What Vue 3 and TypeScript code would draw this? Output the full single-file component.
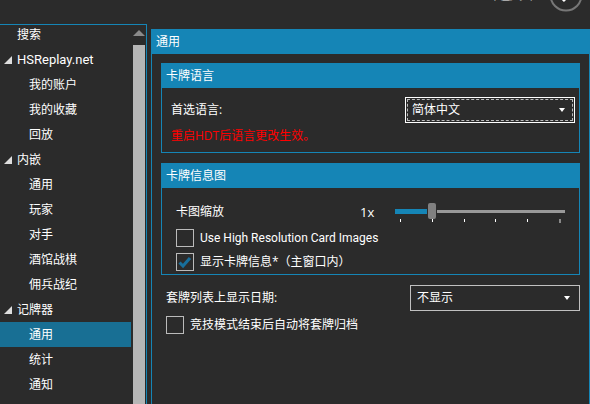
<script setup lang="ts">
interface NavItem { label: string; level: 0 | 1; group?: boolean; selected?: boolean; latin?: boolean }
const navItems: NavItem[] = [
  { label: '搜索', level: 0 },
  { label: 'HSReplay.net', level: 0, group: true, latin: true },
  { label: '我的账户', level: 1 },
  { label: '我的收藏', level: 1 },
  { label: '回放', level: 1 },
  { label: '内嵌', level: 0, group: true },
  { label: '通用', level: 1 },
  { label: '玩家', level: 1 },
  { label: '对手', level: 1 },
  { label: '酒馆战棋', level: 1 },
  { label: '佣兵战纪', level: 1 },
  { label: '记牌器', level: 0, group: true },
  { label: '通用', level: 1, selected: true },
  { label: '统计', level: 1 },
  { label: '通知', level: 1 },
]
const ticks = [0, 1, 2, 3, 4]
</script>

<template>
  <div class="window">
    <header class="topbar">
      <span class="title">选项</span>
      <svg class="back" width="34" height="34" viewBox="0 0 34 34">
        <circle cx="17" cy="17" r="15.5" fill="none" stroke="#777" stroke-width="2" />
        <path d="M10 17 H24 M10 17 L16 11 M10 17 L16 23" fill="none" stroke="#fff" stroke-width="3" />
      </svg>
    </header>
    <div class="main">
      <nav class="nav">
        <ul class="nav-list">
          <li
            v-for="(item, i) in navItems"
            :key="i"
            class="nav-item"
            :class="{ child: item.level === 1, selected: item.selected, latin: item.latin }"
          >
            <svg v-if="item.group" class="expander" width="8" height="8" viewBox="0 0 8 8">
              <polygon points="8,0 8,8 0,8" fill="#dedede" />
            </svg>
            <span>{{ item.label }}</span>
          </li>
        </ul>
        <div class="scrollbar">
          <svg class="scroll-up" width="12" height="6" viewBox="0 0 12 6">
            <polygon points="6,0 12,6 0,6" fill="#8a8a8a" />
          </svg>
          <div class="scroll-thumb"></div>
        </div>
      </nav>

      <section class="panel">
        <h2 class="panel-head">通用</h2>
        <div class="panel-body">
          <div class="group">
            <h3 class="group-head">卡牌语言</h3>
            <div class="group-body lang">
              <div class="lang-row">
                <span>首选语言:</span>
                <div class="select focused">
                  <span>简体中文</span>
                  <i class="caret"></i>
                </div>
              </div>
              <p class="warning">重启HDT后语言更改生效。</p>
            </div>
          </div>

          <div class="group">
            <h3 class="group-head">卡牌信息图</h3>
            <div class="group-body tooltip">
              <div class="scale-row">
                <span class="scale-label">卡图缩放</span>
                <span class="scale-value">1x</span>
                <div class="slider">
                  <div class="track">
                    <div class="track-fill"></div>
                    <div class="thumb"></div>
                    <div class="track-rest"></div>
                  </div>
                  <div class="ticks">
                    <i v-for="t in ticks" :key="t" class="tick"></i>
                    <i class="tick end"></i>
                  </div>
                </div>
              </div>
              <label class="check-row">
                <span class="box"></span>
                <span class="latin-label">Use High Resolution Card Images</span>
              </label>
              <label class="check-row">
                <span class="box">
                  <svg width="16" height="16" viewBox="0 0 16 16">
                    <path d="M2.5 8.5 L6 12 L13 4" fill="none" stroke="#186f9c" stroke-width="3" />
                  </svg>
                </span>
                <span>显示卡牌信息*（主窗口内）</span>
              </label>
            </div>
          </div>

          <div class="date-row">
            <span>套牌列表上显示日期:</span>
            <div class="select plain">
              <span>不显示</span>
              <i class="caret"></i>
            </div>
          </div>
          <label class="check-row archive">
            <span class="box"></span>
            <span>竞技模式结束后自动将套牌归档</span>
          </label>
        </div>
      </section>
    </div>
  </div>
</template>

<style>
html, body { margin: 0; background: #2b2b2b; }
</style>

<style scoped>
.window {
  width: 590px;
  height: 404px;
  overflow: hidden;
  background: #2b2b2b;
  color: #fff;
  font-family: "Open Sans", "Noto Sans CJK SC", sans-serif;
  font-size: 12px;
  line-height: 16px;
}
.topbar {
  height: 24px;
  display: flex;
  justify-content: flex-end;
  align-items: flex-start;
  overflow: hidden;
}
.title {
  font-size: 20px;
  line-height: 28px;
  margin-top: -22px;
  margin-right: 16px;
}
.back {
  margin-top: -22px;
  margin-right: 7px;
  flex: none;
}
.main {
  display: flex;
  height: 380px;
}
.nav {
  width: 147px;
  box-sizing: border-box;
  border-top: 1px solid #1585b6;
  border-right: 1px solid #1585b6;
  display: flex;
  overflow: hidden;
  flex: none;
}
.nav-list {
  list-style: none;
  margin: -3px 0 0;
  padding: 0;
  width: 131px;
  flex: none;
}
.nav-item {
  height: 25px;
  display: flex;
  align-items: center;
  padding-left: 17px;
  position: relative;
}
.nav-item.latin {
  font-family: Roboto, "Noto Sans CJK SC", sans-serif;
  font-size: 13px;
}
.nav-item.child { padding-left: 29px; }
.nav-item.selected { background: #186f94; }
.expander {
  position: absolute;
  left: 4px;
  top: 9px;
}
.scrollbar {
  width: 12px;
  margin-left: 2px;
  display: flex;
  flex-direction: column;
  flex: none;
}
.scroll-up {
  margin-top: 5px;
  flex: none;
}
.scroll-thumb {
  flex: 1;
  margin-top: 9px;
  background: #b6b6b6;
}
.panel {
  margin-left: 4px;
  margin-top: 5px;
  width: 439px;
  box-sizing: border-box;
  border-left: 1px solid #1585b6;
  border-right: 1px solid #1585b6;
  flex: none;
}
.panel-head {
  margin: 0 -1px;
  height: 25px;
  padding-left: 5px;
  background: #1585b6;
  font: inherit;
  display: flex;
  align-items: center;
}
.panel-body {
  padding: 9px 9px 0;
}
.group {
  border: 1px solid #1585b6;
  border-top: 0;
  margin-bottom: 10px;
}
.group-head {
  margin: 0 -1px;
  height: 25px;
  padding-left: 5px;
  background: #1585b6;
  font: inherit;
  display: flex;
  align-items: center;
}
.group-body.lang {
  height: 64px;
  padding: 9px 4px 0 9px;
  box-sizing: border-box;
}
.lang-row {
  display: flex;
  justify-content: space-between;
  align-items: center;
}
.select {
  width: 170px;
  height: 26px;
  box-sizing: border-box;
  display: flex;
  justify-content: space-between;
  align-items: center;
  padding: 0 9px 0 6px;
  position: relative;
}
.select.focused {
  border: 1px solid #fff;
  outline: 1px dashed #bbb;
  outline-offset: -3px;
}
.select.plain {
  border: 1px solid #c0c0c0;
}
.caret {
  width: 0;
  height: 0;
  border-left: 3px solid transparent;
  border-right: 3px solid transparent;
  border-top: 4px solid #fff;
}
.warning {
  margin: 5px 0 0;
  color: #f00;
}
.group-body.tooltip {
  height: 86px;
  padding: 14px 14px 0;
  box-sizing: border-box;
}
.scale-row {
  display: flex;
  align-items: flex-start;
  height: 26px;
  margin-bottom: 1px;
}
.scale-label {
  width: 184px;
  margin-top: 2px;
}
.scale-value {
  width: 35px;
  margin-top: 2px;
  font-size: 13px;
}
.slider {
  width: 170px;
  margin-top: 1px;
}
.track {
  display: flex;
  align-items: center;
  height: 16px;
}
.track-fill {
  width: 32px;
  height: 5px;
  background: #1585b6;
}
.thumb {
  width: 8px;
  height: 16px;
  margin: 0 1px;
  border-radius: 2px;
  background: #808080;
}
.track-rest {
  flex: 1;
  height: 3px;
  background: #999;
}
.ticks {
  display: flex;
  justify-content: space-between;
  padding: 0 4px 0 5px;
  height: 4px;
}
.tick {
  width: 1px;
  height: 3px;
  background: #fff;
}
.tick.end {
  width: 2px;
  height: 4px;
  background: #888;
}
.check-row {
  display: flex;
  align-items: center;
  gap: 6px;
  height: 18px;
  margin-bottom: 6px;
}
.latin-label {
  font-family: Roboto, "Noto Sans CJK SC", sans-serif;
  font-size: 12px;
}
.box {
  width: 18px;
  height: 18px;
  box-sizing: border-box;
  border: 1px solid #bbb;
  flex: none;
  display: flex;
  align-items: center;
  justify-content: center;
}
.date-row {
  display: flex;
  align-items: center;
  justify-content: space-between;
  padding-left: 5px;
  margin-top: 10px;
}
.check-row.archive {
  margin: 5px 0 0 5px;
}
</style>
